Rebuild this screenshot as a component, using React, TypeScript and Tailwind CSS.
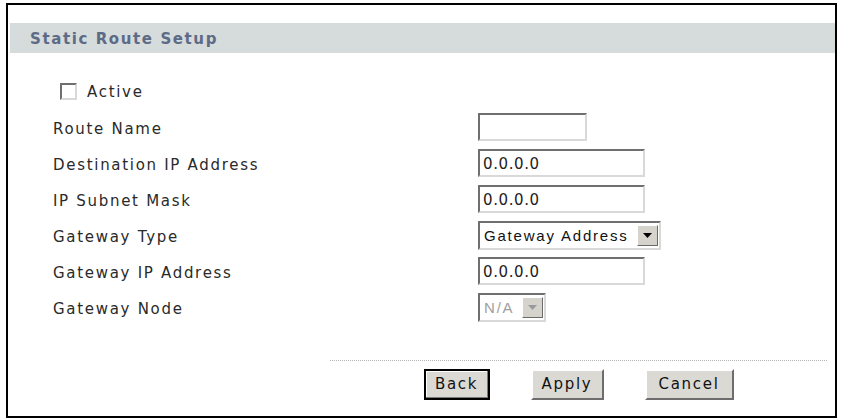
import React from "react";

const insetBox =
  "border-2 border-t-[#6f6f6f] border-l-[#6f6f6f] border-b-[#d9d9d9] border-r-[#d9d9d9] bg-white";

function TextBox({ width, value }: { width: string; value?: string }) {
  return (
    <div
      className={`${insetBox} ${width} h-[28px] flex items-center pl-[3px] pt-[2px] text-[#222] tracking-[0.6px]`}
    >
      {value}
    </div>
  );
}

function Arrow({ color }: { color: string }) {
  return (
    <svg width="9" height="5" viewBox="0 0 9 5">
      <polygon points="0,0 9,0 4.5,5" fill={color} />
    </svg>
  );
}

function Select({
  width,
  value,
  disabled,
}: {
  width: string;
  value: string;
  disabled?: boolean;
}) {
  return (
    <div className={`${insetBox} ${width} h-[29px] flex items-center justify-between`}>
      <span
        className={`pl-[4px] pt-[1px] font-['Liberation_Sans',sans-serif] tracking-[1.8px] ${
          disabled ? "text-[#a0a0a0]" : "text-[#111]"
        }`}
      >
        {value}
      </span>
      <div className="w-[21px] h-[21px] mr-[1px] bg-[#d6d3cc] border border-t-white border-l-white border-b-[#6a6a6a] border-r-[#6a6a6a] flex items-center justify-center">
        <Arrow color={disabled ? "#9a9a9a" : "#000"} />
      </div>
    </div>
  );
}

function Row({ label, children }: { label: string; children: React.ReactNode }) {
  return (
    <div className="h-[36px] grid grid-cols-[425px_1fr] items-center">
      <span className="text-[#2a2a2a] pt-[4px]">{label}</span>
      <div>{children}</div>
    </div>
  );
}

function Button({ label, width, primary }: { label: string; width: string; primary?: boolean }) {
  return (
    <div
      className={`${width} h-[31px] flex items-center justify-center bg-[#dbd9d3] text-[#111] ${
        primary
          ? "border-2 border-black shadow-[inset_-1px_-1px_0_#7a7a7a,inset_1px_1px_0_#ffffff]"
          : "border-2 border-t-white border-l-white border-b-[#6d6d6d] border-r-[#6d6d6d]"
      }`}
    >
      {label}
    </div>
  );
}

export default function App() {
  return (
    <div className="w-[843px] h-[420px] bg-white overflow-hidden font-['DejaVu_Sans',Verdana,sans-serif] text-[15px] tracking-[1.7px] leading-none">
      <div className="ml-[6px] mt-[3px] w-[831px] h-[415px] border-2 border-black flex flex-col">
        <div className="mt-[18px] ml-[2px] h-[30px] bg-[#d6dbdc] flex items-center pl-[20px] pt-[2px]">
          <span className="font-bold text-[#5d6b86] tracking-[1.6px]">Static Route Setup</span>
        </div>

        <div className="mt-[20px] pl-[45px]">
          <div className="h-[36px] flex items-center">
            <div className={`ml-[7px] w-[17px] h-[17px] ${insetBox}`} />
            <span className="ml-[10px] pt-[3px] text-[#2a2a2a]">Active</span>
          </div>
          <Row label="Route Name">
            <TextBox width="w-[109px]" />
          </Row>
          <Row label="Destination IP Address">
            <TextBox width="w-[167px]" value="0.0.0.0" />
          </Row>
          <Row label="IP Subnet Mask">
            <TextBox width="w-[167px]" value="0.0.0.0" />
          </Row>
          <Row label="Gateway Type">
            <Select width="w-[183px]" value="Gateway Address" />
          </Row>
          <Row label="Gateway IP Address">
            <TextBox width="w-[167px]" value="0.0.0.0" />
          </Row>
          <Row label="Gateway Node">
            <Select width="w-[68px]" value="N/A" disabled />
          </Row>
        </div>

        <div className="mt-[35px] ml-[322px] w-[497px] border-t border-dotted border-[#b5b5b5]" />
        <div className="mt-[8px] ml-[322px] w-[497px] flex justify-center gap-[41px]">
          <Button label="Back" width="w-[66px]" primary />
          <Button label="Apply" width="w-[73px]" />
          <Button label="Cancel" width="w-[89px]" />
        </div>
      </div>
    </div>
  );
}
